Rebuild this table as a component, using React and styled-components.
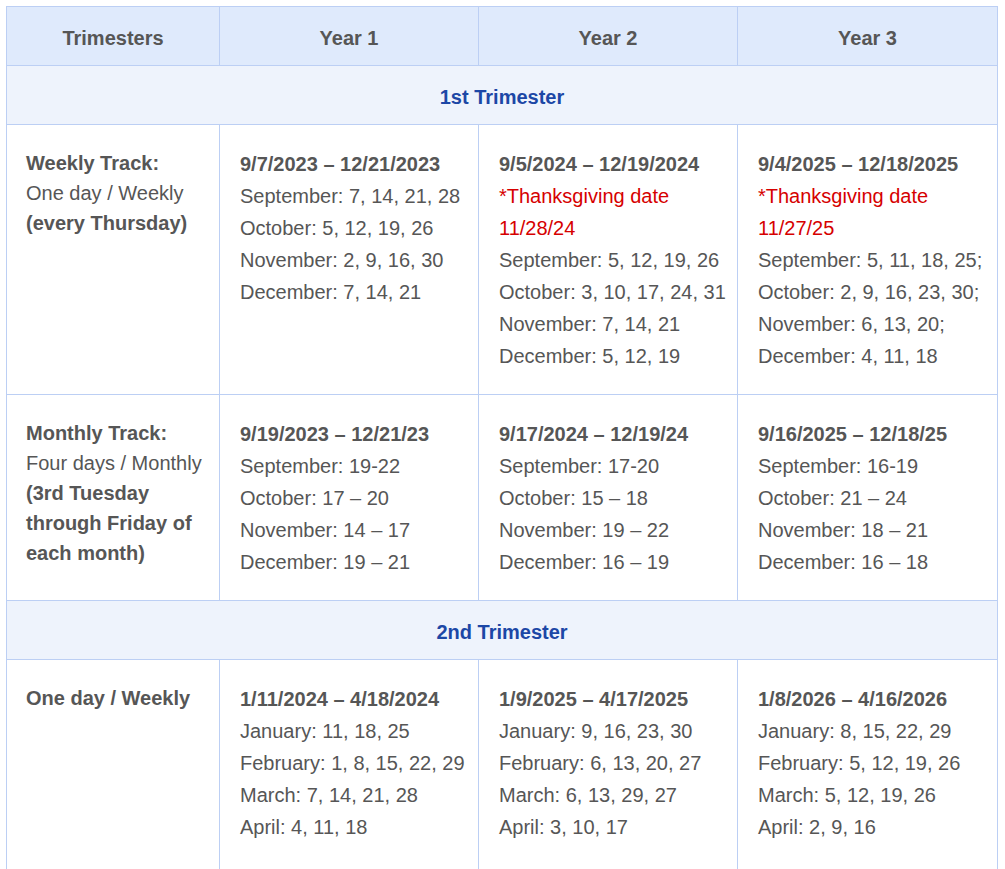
import React from "react";
import styled, { createGlobalStyle } from "styled-components";

const GlobalStyle = createGlobalStyle`
	body {
		margin: 0;
		background: #ffffff;
		font-family: "Liberation Sans", Arial, sans-serif;
	}
`;

// Schedule data
const trimesters = [
	{
		title: "1st Trimester",
		tracks: [
			{
				label: [
					{ text: "Weekly Track:", bold: true },
					{ text: "One day / Weekly" },
					{ text: "(every Thursday)", bold: true },
				],
				years: [
					{
						range: "9/7/2023 – 12/21/2023",
						lines: [
							"September: 7, 14, 21, 28",
							"October: 5, 12, 19, 26",
							"November: 2, 9, 16, 30",
							"December: 7, 14, 21",
						],
					},
					{
						range: "9/5/2024 – 12/19/2024",
						note: ["*Thanksgiving date", "11/28/24"],
						lines: [
							"September: 5, 12, 19, 26",
							"October: 3, 10, 17, 24, 31",
							"November: 7, 14, 21",
							"December: 5, 12, 19",
						],
					},
					{
						range: "9/4/2025 – 12/18/2025",
						note: ["*Thanksgiving date", "11/27/25"],
						lines: [
							"September: 5, 11, 18, 25;",
							"October: 2, 9, 16, 23, 30;",
							"November: 6, 13, 20;",
							"December: 4, 11, 18",
						],
					},
				],
			},
			{
				label: [
					{ text: "Monthly Track:", bold: true },
					{ text: "Four days / Monthly" },
					{ text: "(3rd Tuesday", bold: true },
					{ text: "through Friday of", bold: true },
					{ text: "each month)", bold: true },
				],
				years: [
					{
						range: "9/19/2023 – 12/21/23",
						lines: [
							"September: 19-22",
							"October: 17 – 20",
							"November: 14 – 17",
							"December: 19 – 21",
						],
					},
					{
						range: "9/17/2024 – 12/19/24",
						lines: [
							"September: 17-20",
							"October: 15 – 18",
							"November: 19 – 22",
							"December: 16 – 19",
						],
					},
					{
						range: "9/16/2025 – 12/18/25",
						lines: [
							"September: 16-19",
							"October: 21 – 24",
							"November: 18 – 21",
							"December: 16 – 18",
						],
					},
				],
			},
		],
	},
	{
		title: "2nd Trimester",
		tracks: [
			{
				label: [{ text: "One day / Weekly", bold: true }],
				years: [
					{
						range: "1/11/2024 – 4/18/2024",
						lines: [
							"January: 11, 18, 25",
							"February: 1, 8, 15, 22, 29",
							"March: 7, 14, 21, 28",
							"April: 4, 11, 18",
						],
					},
					{
						range: "1/9/2025 – 4/17/2025",
						lines: [
							"January: 9, 16, 23, 30",
							"February: 6, 13, 20, 27",
							"March: 6, 13, 29, 27",
							"April: 3, 10, 17",
						],
					},
					{
						range: "1/8/2026 – 4/16/2026",
						lines: [
							"January: 8, 15, 22, 29",
							"February: 5, 12, 19, 26",
							"March: 5, 12, 19, 26",
							"April: 2, 9, 16",
						],
					},
				],
			},
		],
	},
];

const App = () => {
	return (
		<Page>
			<GlobalStyle />
			<Table>
				<colgroup>
					<col style={{ width: 213 }} />
					<col style={{ width: 259 }} />
					<col style={{ width: 259 }} />
					<col style={{ width: 260 }} />
				</colgroup>
				<thead>
					<tr>
						<HeadCell>Trimesters</HeadCell>
						<HeadCell>Year 1</HeadCell>
						<HeadCell>Year 2</HeadCell>
						<HeadCell>Year 3</HeadCell>
					</tr>
				</thead>
				<tbody>
					{trimesters.map((t) => (
						<React.Fragment key={t.title}>
							<tr>
								<SectionCell colSpan={4}>{t.title}</SectionCell>
							</tr>
							{t.tracks.map((track, i) => (
								<tr key={i}>
									<LabelCell>
										{track.label.map((l, j) => (
											<LabelLine key={j} $bold={l.bold}>
												{l.text}
											</LabelLine>
										))}
									</LabelCell>
									{track.years.map((y, k) => (
										<DateCell key={k}>
											<DateLine $bold>{y.range}</DateLine>
											{y.note &&
												y.note.map((n, m) => (
													<DateLine key={"n" + m} $red>
														{n}
													</DateLine>
												))}
											{y.lines.map((line, m) => (
												<DateLine key={m}>{line}</DateLine>
											))}
										</DateCell>
									))}
								</tr>
							))}
						</React.Fragment>
					))}
				</tbody>
			</Table>
		</Page>
	);
};

export default App;

/* --------------------------------------
       STYLED COMPONENTS
-------------------------------------- */

const Page = styled.div`
	padding: 6px;
`;

const Table = styled.table`
	width: 991px;
	table-layout: fixed;
	border-collapse: collapse;
	font-family: "Liberation Sans", Arial, sans-serif;
	font-size: 20px;
	color: #565656;

	td,
	th {
		border: 1px solid #bccff4;
	}

	tbody tr:last-child td {
		padding-bottom: 30px;
	}
`;

const HeadCell = styled.th`
	background: #dfeafc;
	height: 54px;
	padding: 4px 20px 0;
	font-weight: bold;
	text-align: center;
	vertical-align: middle;
	color: #565656;
`;

const SectionCell = styled.td`
	background: #eef3fc;
	height: 54px;
	padding: 4px 20px 0;
	font-weight: bold;
	text-align: center;
	vertical-align: middle;
	color: #1c47a6;
`;

const LabelCell = styled.td`
	vertical-align: top;
	padding: 23px 6px 22px 19px;
`;

const LabelLine = styled.div`
	line-height: 30px;
	white-space: nowrap;
	font-weight: ${(p) => (p.$bold ? "bold" : "normal")};
`;

const DateCell = styled.td`
	vertical-align: top;
	padding: 23px 12px 22px 20px;
`;

const DateLine = styled.div`
	line-height: 32px;
	white-space: nowrap;
	font-weight: ${(p) => (p.$bold ? "bold" : "normal")};
	color: ${(p) => (p.$red ? "#d60000" : "#565656")};
`;
